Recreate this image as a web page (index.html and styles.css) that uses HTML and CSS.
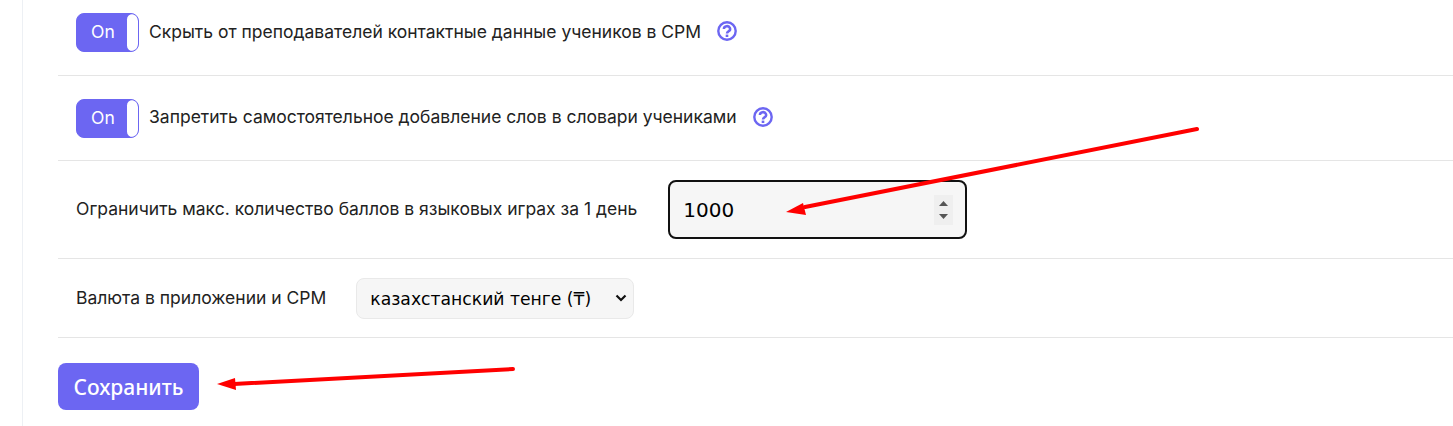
FILE: index.html
```html
<!DOCTYPE html>
<html lang="ru">
<head>
    <meta charset="UTF-8">
    <meta name="viewport" content="width=device-width, initial-scale=1.0">
    <title>Настройки</title>
    <link rel="stylesheet" href="styles.css">
</head>
<body>
    <div class="settings">
        <div class="row row-first">
            <div class="toggle"><span class="toggle-label">On</span><span class="toggle-knob"></span></div>
            <span class="toggle-text">Скрыть от преподавателей контактные данные учеников в CPM</span>
            <svg class="help" viewBox="0 0 20 20" width="20" height="20">
                <circle cx="10" cy="10" r="8.7" fill="none" stroke="#6c66f2" stroke-width="2.4"/>
                <path d="M6.9 8a3.1 2.8 0 1 1 4.6 2.4c-1 .6-1.5 1-1.5 2.1" fill="none" stroke="#6c66f2" stroke-width="2.5"/>
                <rect x="8.7" y="13.6" width="2.6" height="2.4" fill="#6c66f2"/>
            </svg>
        </div>
        <div class="row row-toggle">
            <div class="toggle"><span class="toggle-label">On</span><span class="toggle-knob"></span></div>
            <span class="toggle-text">Запретить самостоятельное добавление слов в словари учениками</span>
            <svg class="help" viewBox="0 0 20 20" width="20" height="20">
                <circle cx="10" cy="10" r="8.7" fill="none" stroke="#6c66f2" stroke-width="2.4"/>
                <path d="M6.9 8a3.1 2.8 0 1 1 4.6 2.4c-1 .6-1.5 1-1.5 2.1" fill="none" stroke="#6c66f2" stroke-width="2.5"/>
                <rect x="8.7" y="13.6" width="2.6" height="2.4" fill="#6c66f2"/>
            </svg>
        </div>
        <div class="row row-limit">
            <label for="maxPoints">Ограничить макс. количество баллов в языковых играх за 1 день</label>
            <div class="number-wrap">
                <input class="field-number" type="number" id="maxPoints" value="1000">
                <svg class="spin" viewBox="0 0 19 30" width="19" height="30">
                    <polygon points="5,11 14,11 9.500,6" fill="#555"/>
                    <polygon points="5,19 14,19 9.500,24" fill="#555"/>
                </svg>
            </div>
        </div>
        <div class="row row-currency">
            <label for="currency">Валюта в приложении и CPM</label>
            <select class="field-select" id="currency">
                <option>казахстанский тенге (₸)</option>
            </select>
        </div>
        <button class="save-btn" type="button">Сохранить</button>
    </div>

    <!-- red arrows drawn over the screenshot -->
    <svg class="arrows" width="1453" height="426" viewBox="0 0 1453 426">
        <path d="M1197 129 L805 207" stroke="#f00" stroke-width="4" stroke-linecap="round"/>
        <polygon points="786,212 803,203 806,215" fill="#f00"/>
        <path d="M513 369 L234 384" stroke="#f00" stroke-width="4" stroke-linecap="round"/>
        <polygon points="217,384 235,378 236,390" fill="#f00"/>
    </svg>
</body>
</html>
```

FILE: styles.css
```css
body {
    margin: 0;
    height: 426px;
    overflow: hidden;
    background-color: #fff;
    font-family: Inter, "Liberation Sans", sans-serif;
    font-size: 17.5px;
    color: #222;
}
.settings {
    margin-left: 22px;
    height: 426px;
    padding-left: 35px;
    border-left: 1px solid #edf0f4;
}
.row {
    display: flex;
    align-items: center;
    border-bottom: 1px solid #e5e5e5;
    padding-left: 18px;
}
.row-first {
    box-sizing: border-box;
    height: 76px;
    padding-top: 13px;
    padding-bottom: 23px;
}
.row-toggle {
    height: 84px;
}
.row-limit {
    height: 97px;
}
.row-currency {
    height: 78px;
}
.row label {
    margin-right: 30px;
    margin-bottom: 2px;
}
.row-limit label {
    margin-right: 31px;
}
.toggle {
    display: flex;
    box-sizing: border-box;
    width: 63px;
    height: 39px;
    border: 1px solid #6c66f2;
    border-radius: 8px;
    background-color: #6c66f2;
    overflow: hidden;
}
.toggle-label {
    flex: 1;
    padding-left: 14px;
    font-size: 17.5px;
    line-height: 36px;
    color: #fff;
}
.toggle-knob {
    width: 11px;
    background-color: #fff;
    border-radius: 8px;
}
.toggle-text {
    margin-left: 10px;
    margin-bottom: 3px;
}
.help {
    margin-left: 16px;
    margin-bottom: 3px;
}
.number-wrap {
    position: relative;
    display: flex;
}
.field-number {
    box-sizing: border-box;
    width: 299px;
    height: 59px;
    padding: 0 13px;
    border: 2px solid #111;
    border-radius: 8px;
    background-color: #f6f6f6;
    font-family: "DejaVu Sans", sans-serif;
    font-size: 20px;
    color: #000;
    outline: none;
}
.field-number::-webkit-inner-spin-button {
    display: none;
}
.spin {
    position: absolute;
    top: 15px;
    right: 14px;
    background-color: #efefef;
}
.field-select {
    box-sizing: border-box;
    width: 278px;
    height: 41px;
    padding: 2px 13px 0;
    border: 1px solid #e9e9e9;
    border-radius: 8px;
    appearance: none;
    background-color: #f6f6f6;
    background-image: url("data:image/svg+xml,%3Csvg xmlns='http://www.w3.org/2000/svg' width='12' height='8'%3E%3Cpath d='M1.500 1.500 6 6 10.500 1.500' fill='none' stroke='%23111' stroke-width='2.200'/%3E%3C/svg%3E");
    background-repeat: no-repeat;
    background-position: right 6px center;
    font-family: "DejaVu Sans", sans-serif;
    font-size: 17.2px;
    color: #000;
}
.save-btn {
    display: block;
    width: 141px;
    height: 47px;
    margin-top: 25px;
    padding: 0;
    border: none;
    border-radius: 8px;
    background-color: #6c66f2;
    font-family: "Noto Sans", sans-serif;
    font-size: 21px;
    font-weight: 500;
    color: #fff;
}
.arrows {
    position: absolute;
    top: 0;
    left: 0;
}
```
